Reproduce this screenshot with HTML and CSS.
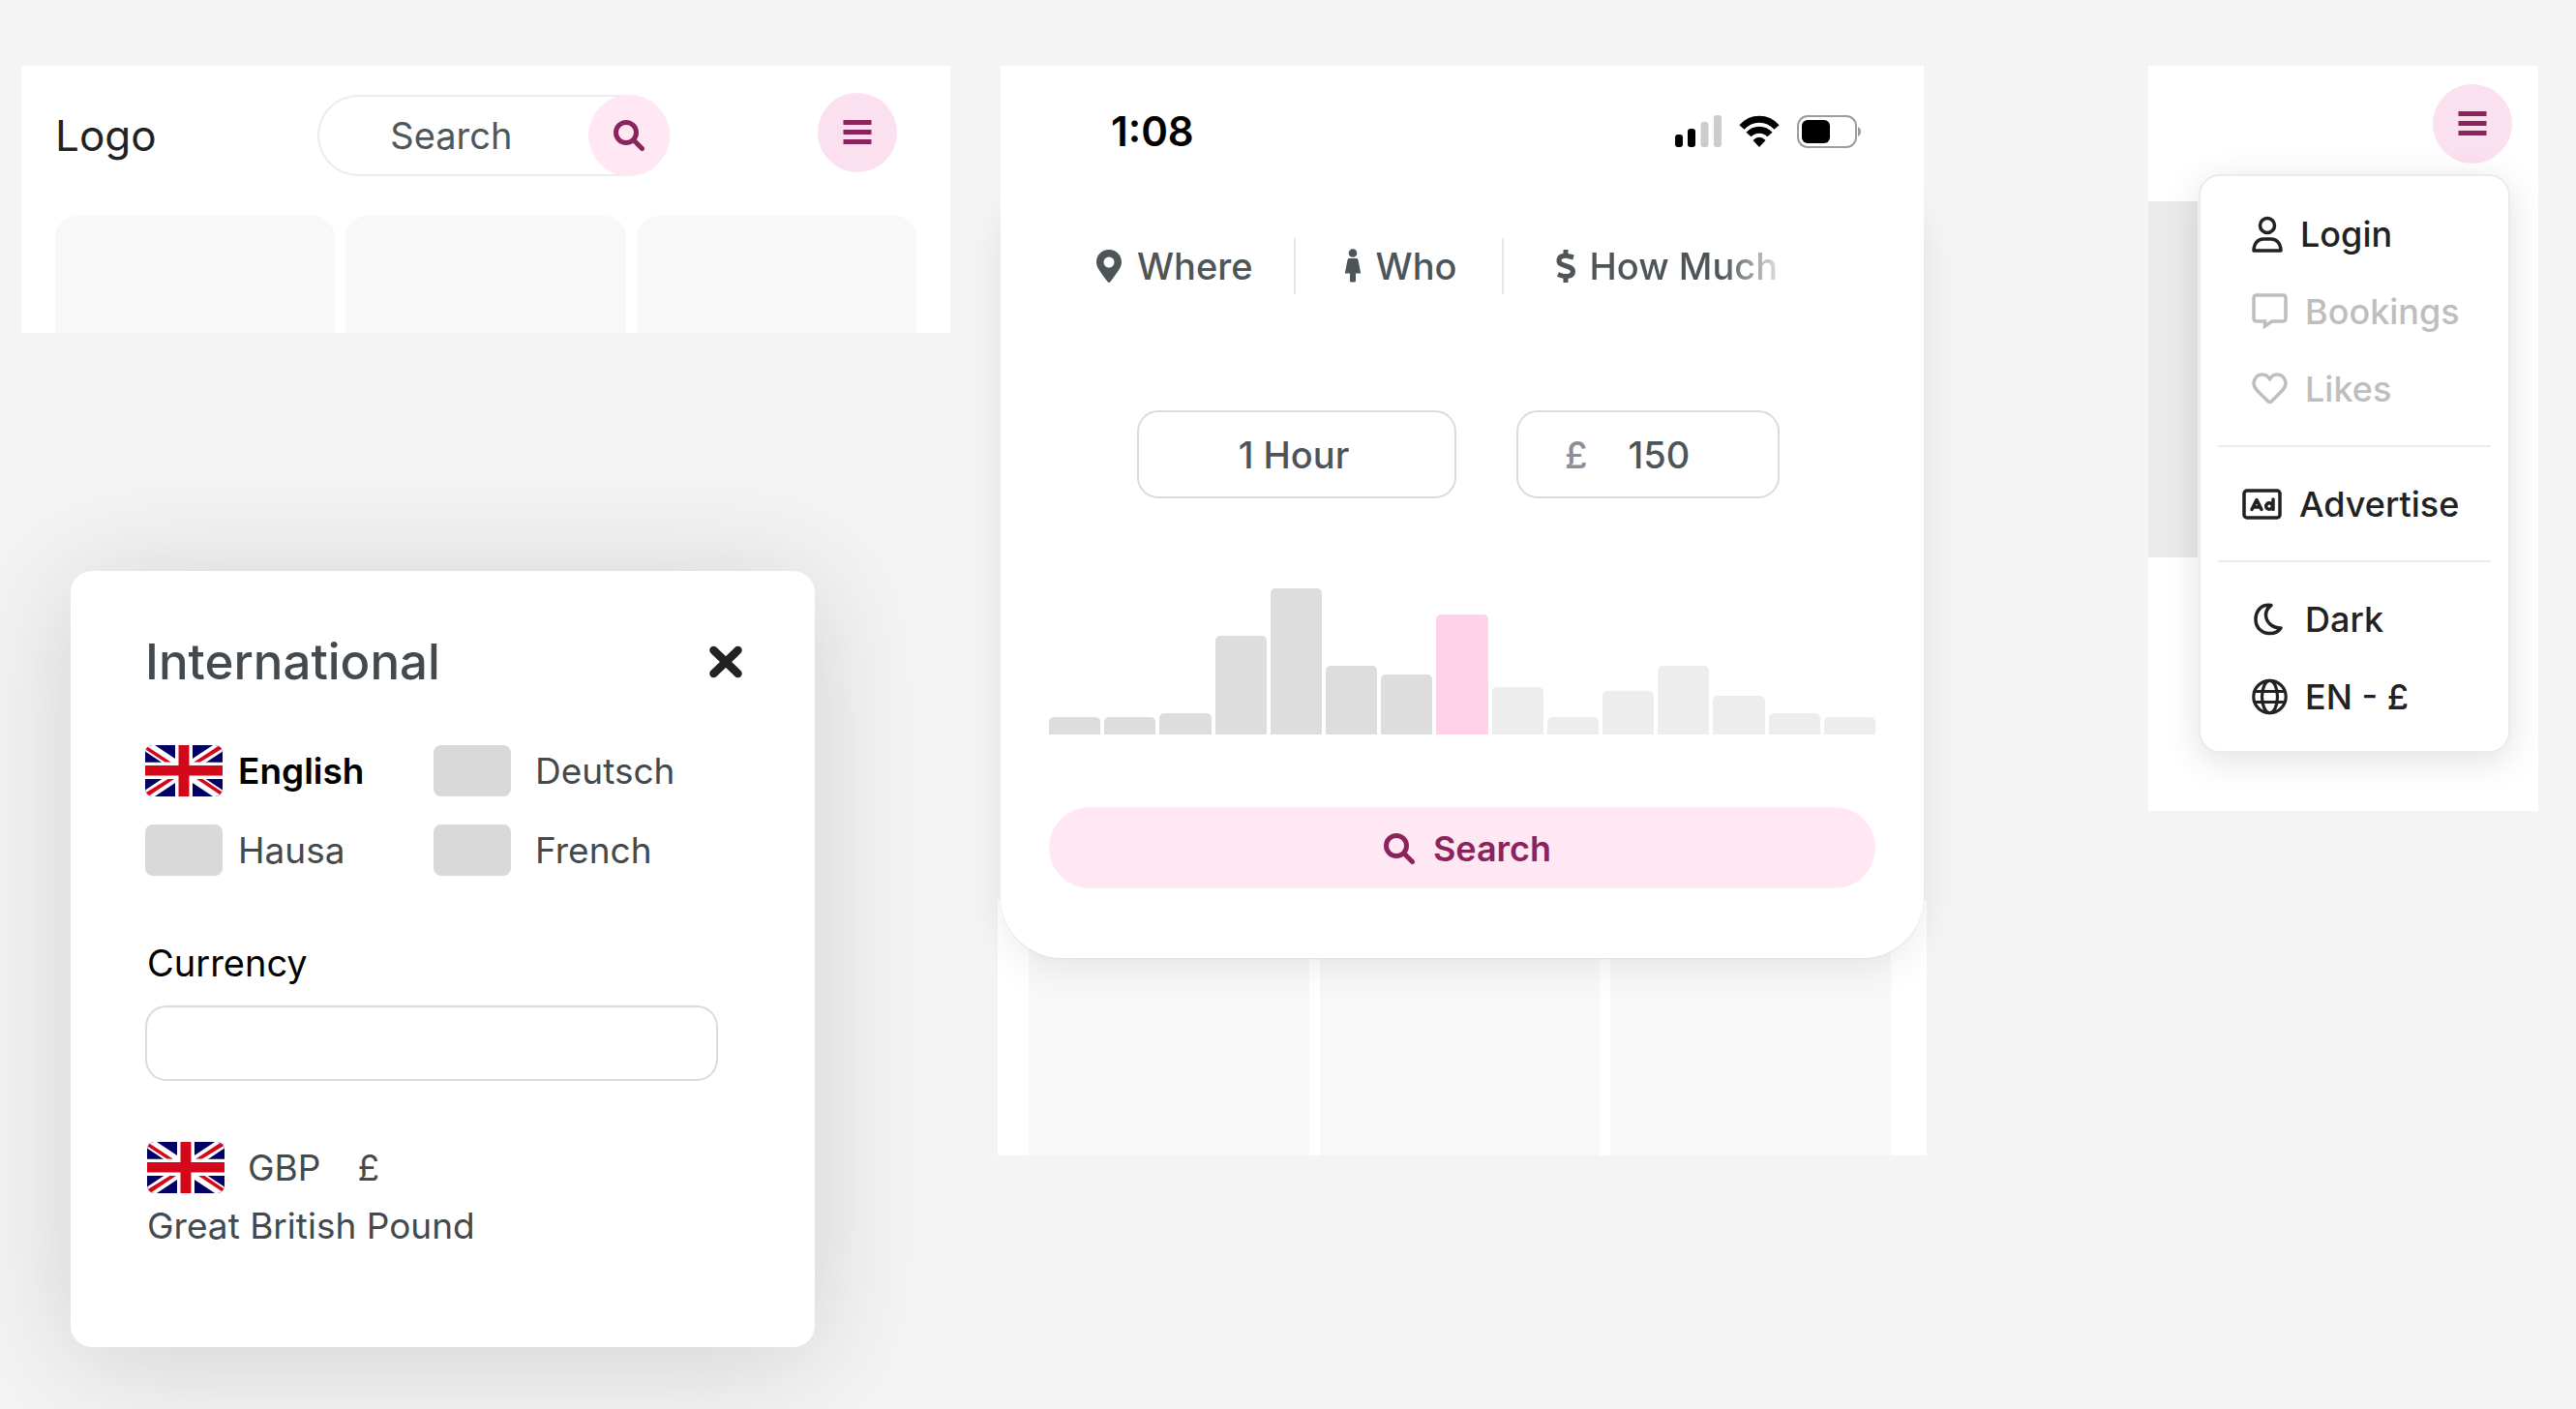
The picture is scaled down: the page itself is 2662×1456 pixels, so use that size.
FILE: index.html
```html
<!DOCTYPE html>
<html lang="en">
<head>
<meta charset="utf-8">
<meta name="viewport" content="width=device-width, initial-scale=1">
<title>Navigation components</title>
<link rel="stylesheet" href="styles.css">
</head>
<body>
<svg class="defs" aria-hidden="true">
  <symbol id="search" viewBox="0 0 34 34">
    <circle cx="14" cy="14" r="10.500" fill="none" stroke="currentColor" stroke-width="5"/>
    <path d="M22 22 L30.500 30.500" stroke="currentColor" stroke-width="5" stroke-linecap="round"/>
  </symbol>
  <symbol id="bars" viewBox="0 0 30 28">
    <path d="M0.5 3.5H29.5M0.5 13.5H29.5M0.5 23.5H29.5" stroke="currentColor" stroke-width="5"/>
  </symbol>
  <symbol id="flag" viewBox="0 0 80 53">
    <path fill="#006" d="M0 0H80V53H0z"/>
    <path stroke="#fff" stroke-width="11" d="M0 0L80 53M80 0L0 53"/>
    <path fill="#d4081b" d="M0 0L27 17.700H20.800L0 4.200zM80 0V3.500L56.500 17.700H50L77 0zM0 53V49.500L23.500 35H30L3 53zM80 53L53 35H59.500L80 48.700z"/>
    <path fill="#fff" d="M31 0H49V53H31zM0 17.700H80V35H0z"/>
    <path fill="#d4081b" d="M34.500 0H45.500V53H34.500zM0 21H80V31.500H0z"/>
  </symbol>
</svg>

<main class="board">
  <div class="column-left">
    <section class="header-panel">
      <header class="site-header">
        <a class="logo" href="#">Logo</a>
        <form class="search-pill">
          <input class="search-input" type="text" placeholder="Search" aria-label="Search">
          <button class="round search-go" type="button" aria-label="Search"><svg class="icon-search"><use href="#search"/></svg></button>
        </form>
        <button class="round menu-button" type="button" aria-label="Menu"><svg class="icon-bars"><use href="#bars"/></svg></button>
      </header>
      <div class="tiles tiles-top"><div></div><div></div><div></div></div>
    </section>

    <section class="dialog">
      <div class="dialog-head">
        <h2>International</h2>
        <button class="close" type="button" aria-label="Close">
          <svg viewBox="0 0 36 36"><path d="M5.500 6L30.500 30M30.500 6L5.500 30" stroke="currentColor" stroke-width="8.500" stroke-linecap="round"/></svg>
        </button>
      </div>
      <div class="languages">
        <button class="language selected" type="button"><svg class="flag"><use href="#flag"/></svg>English</button>
        <button class="language wide" type="button"><span class="flag"></span>Deutsch</button>
        <button class="language" type="button"><span class="flag"></span>Hausa</button>
        <button class="language wide" type="button"><span class="flag"></span>French</button>
      </div>
      <label class="currency-label" for="currency">Currency</label>
      <input class="field currency-input" id="currency" type="text">
      <div class="currency">
        <div class="currency-code"><svg class="flag"><use href="#flag"/></svg><span>GBP</span><span>£</span></div>
        <div>Great British Pound</div>
      </div>
    </section>
  </div>

  <section class="phone">
    <div class="sheet">
      <div class="status">
        <time>1:08</time>
        <div class="status-icons">
          <svg width="48" height="34" viewBox="0 0 48 34"><g fill="#000"><rect y="20" width="8" height="13" rx="3"/><rect x="13" y="14" width="8" height="19" rx="3"/></g><g fill="#ccc"><rect x="26.500" y="7" width="8" height="26" rx="3"/><rect x="40" width="8" height="33" rx="3"/></g></svg>
          <svg width="42" height="34" viewBox="0 0 42 34"><g fill="none" stroke="#000" stroke-width="7"><path d="M3 12.500C13 1.500 29 1.500 39 12.500"/><path d="M10 20C16 13.500 26 13.500 32 20"/></g><path d="M14.500 26Q21 19.500 27.500 26L21 33z"/></svg>
          <svg width="66" height="34" viewBox="0 0 66 34"><rect x="1" y="1" width="60" height="32" rx="10" fill="none" stroke="#9c9c9c" stroke-width="2"/><rect x="5" y="5" width="29" height="24" rx="6"/><path d="M63 12Q66 13.500 66 17T63 22z" fill="#9c9c9c"/></svg>
        </div>
      </div>
      <nav class="tabs">
        <a class="tab" href="#"><svg width="28" height="36" viewBox="0 0 28 36"><path fill="currentColor" fill-rule="evenodd" d="M14 1C22 1 27 7 27 14C27 18.500 24 23 15.500 34Q14 36 12.500 34C4 23 1 18.500 1 14C1 7 6 1 14 1zM14 8.500A5.500 5.500 0 1 0 14 19.500A5.500 5.500 0 1 0 14 8.500z"/></svg>Where</a>
        <a class="tab" href="#"><svg width="18" height="36" viewBox="0 0 18 36"><circle cx="9" cy="4.500" r="4.300" fill="currentColor"/><path fill="currentColor" d="M4.500 10H13.500L14.500 11.500L17.200 25.500H12V33Q12 34.500 10.500 34.500H7.500Q6 34.500 6 33V25.500H.800L3.500 11.500z"/></svg>Who</a>
        <a class="tab tab-fade" href="#"><svg width="20" height="36" viewBox="0 0 20 36"><path fill="none" stroke="currentColor" stroke-width="5" stroke-linejoin="round" d="M10 1V7M10 29V35M18 9C7 5.500 3 8 3 12.500C3 19 17.500 16.500 17.500 23.500C17.500 29 10 30 2 26.500"/></svg>How Much</a>
      </nav>
      <div class="budget">
        <input class="field duration" type="text" value="1 Hour" aria-label="Duration">
        <label class="field amount"><span>£</span><input type="text" value="150" aria-label="Amount"></label>
      </div>
      <div class="chart">
        <i style="height:18px"></i><i style="height:18px"></i><i style="height:22px"></i><i style="height:102px"></i><i style="height:151px"></i><i style="height:71px"></i><i style="height:62px"></i><i class="current" style="height:124px"></i><i class="above" style="height:49px"></i><i class="above" style="height:18px"></i><i class="above" style="height:45px"></i><i class="above" style="height:71px"></i><i class="above" style="height:40px"></i><i class="above" style="height:22px"></i><i class="above" style="height:18px"></i>
      </div>
      <button class="submit" type="button"><svg class="icon-search"><use href="#search"/></svg>Search</button>
    </div>
    <div class="tiles tiles-bottom"><div></div><div></div><div></div></div>
  </section>

  <section class="menu-panel">
    <div class="menu-top">
      <button class="round menu-button" type="button" aria-label="Menu"><svg class="icon-bars"><use href="#bars"/></svg></button>
    </div>
    <div class="hero"></div>
    <nav class="menu">
      <a class="item" href="#"><svg width="32" height="38" viewBox="0 0 32 38"><g fill="none" stroke="currentColor" stroke-width="3.500"><circle cx="16" cy="10" r="7.500"/><path stroke-linejoin="round" d="M2 36C2 29 6 24 12 24H20C26 24 30 29 30 36z"/></g></svg>Login</a>
      <a class="item off" href="#"><svg width="37" height="38" viewBox="0 0 37 38"><path fill="none" stroke="currentColor" stroke-width="3.500" d="M5 2H32Q35 2 35 5V26Q35 29 32 29H21L13.500 34V29H5Q2 29 2 26V5Q2 2 5 2z"/></svg>Bookings</a>
      <a class="item off" href="#"><svg width="37" height="38" viewBox="0 0 37 38"><path fill="none" stroke="currentColor" stroke-width="3.500" stroke-linejoin="round" d="M18.500 9C15 2 6 2.500 3 9C.500 14 3 18 6 21L16.500 31.500Q18.500 33.500 20.500 31.500L31 21C34 18 36.500 14 34 9C31 2.500 22 2 18.500 9z"/></svg>Likes</a>
      <hr>
      <a class="item ad" href="#"><svg width="41" height="32" viewBox="0 0 41 32"><g fill="none" stroke="currentColor" stroke-width="3.500" stroke-linecap="round" stroke-linejoin="round"><rect x="2" y="2" width="37" height="28" rx="3"/><path d="M10 21.500L15 11.500L20 21.500M12.500 19H18M32 11V21.500"/><circle cx="28" cy="18" r="3.300"/></g></svg>Advertise</a>
      <hr>
      <a class="item" href="#"><svg width="37" height="38" viewBox="0 0 37 38"><path fill="none" stroke="currentColor" stroke-width="3.500" stroke-linejoin="round" d="M20 4.500C9 3 4 11 4 19C4 28 11 34 19 33.500C24 33.500 28 31 30 28C21 28 15 22 14.500 15C14.300 11 16.500 7 20 4.500z"/></svg>Dark</a>
      <a class="item" href="#"><svg width="37" height="38" viewBox="0 0 37 38"><g fill="none" stroke="currentColor" stroke-width="3.200"><circle cx="18.500" cy="19" r="16.700"/><ellipse cx="18.500" cy="19" rx="8" ry="16.700"/><path d="M2.500 13.500H34.500M2.500 24.500H34.500"/></g></svg>EN - £</a>
    </nav>
  </section>
</main>
</body>
</html>
```
FILE: styles.css
```css
* { box-sizing: border-box; }
body {
  margin: 0;
  min-height: 100vh;
  overflow-x: hidden;
  background: #f4f4f4;
  color: #43494d;
  font: 400 37px/44px Inter, sans-serif;
}
button, input { margin: 0; padding: 0; border: 0; background: none; color: inherit; font: inherit; }
input { min-width: 0; outline: 0; }
a { color: inherit; text-decoration: none; }
svg { display: block; flex: none; }
.defs { position: absolute; width: 0; height: 0; }

.board {
  display: grid;
  grid-template-columns: 960fr 49fr 960fr 229fr 403fr;
  align-items: start;
  padding: 68px 39px 64px 22px;
}
.phone { grid-column: 3; }
.menu-panel { grid-column: 5; }

.round {
  display: flex;
  flex: none;
  align-items: center;
  justify-content: center;
  border-radius: 50%;
  color: #8b235d;
}
.menu-button { width: 82px; height: 82px; background: #fbe1f0; }
.icon-bars { width: 30px; height: 28px; }
.icon-search { width: 34px; height: 34px; }

.header-panel { height: 276px; padding: 28px 35px 0; background: #fff; }
.site-header {
  display: flex;
  align-items: flex-start;
  justify-content: space-between;
  padding-right: 20px;
}
.logo { padding-top: 22px; color: #222; font-size: 44px; }
.search-pill {
  display: flex;
  width: 364px;
  height: 84px;
  margin: 2px 0 0 14px;
  border-radius: 42px;
  box-shadow: inset 0 0 0 2px #ececec;
}
.search-input { flex: 1; padding-left: 75px; font-size: 38px; }
.search-input::placeholder { color: #50575b; opacity: 1; }
.search-go { width: 84px; height: 84px; background: #ffe7f3; }

.tiles { display: grid; grid-template-columns: repeat(3, 1fr); gap: 11px; }
.tiles div { background: #f8f8f8; }
.tiles-top { height: 121px; margin-top: 41px; }
.tiles-top div { border-radius: 22px 22px 0 0; }

.dialog {
  width: calc(100% - 191px);
  height: 802px;
  margin: 246px 0 0 51px;
  padding: 66px 74px 0 77px;
  border-radius: 22px;
  background: #fff;
  box-shadow: 0 12px 120px rgba(50, 50, 65, .18);
}
.dialog-head { display: flex; align-items: center; justify-content: space-between; }
.dialog h2 { margin: 0; font-size: 51px; font-weight: 500; line-height: 56px; }
.close { width: 36px; height: 36px; color: #222; }
.languages {
  display: grid;
  grid-template-columns: 298px 1fr;
  row-gap: 29px;
  margin-top: 58px;
}
.language { display: flex; align-items: center; gap: 16px; height: 53px; text-align: left; }
.language.wide { gap: 25px; }
.language.selected { color: #000; font-weight: 600; }
.flag { flex: none; width: 80px; height: 53px; border-radius: 8px; background: #d9d9d9; }
.currency-label { display: block; margin-top: 68px; padding-left: 2px; color: #000; font-size: 38px; }
.field { border: 2px solid #dadbe1; border-radius: 22px; }
.currency-input { display: block; width: 592px; height: 78px; margin-top: 22px; padding: 0 20px; }
.currency { margin: 63px 0 0 2px; }
.currency-code { display: flex; align-items: center; gap: 24px; height: 53px; margin-bottom: 12px; }
.currency-code span + span { margin-left: 14px; }

.phone { display: flex; flex-direction: column; }
.sheet {
  position: relative;
  height: 922px;
  margin: 0 3px;
  padding: 46px 50px 0;
  border-radius: 0 0 64px 64px;
  background: #fff;
  font-size: 38px;
  font-weight: 500;
  color: #4e5559;
}
.sheet::before {
  content: "";
  position: absolute;
  z-index: -1;
  inset: 120px 0 0;
  border-radius: 64px;
  box-shadow: 0 10px 40px rgba(0, 0, 0, .08), 0 1px 2px #e8eeec;
}
.status { display: flex; justify-content: space-between; padding: 0 15px 0 64px; color: #000; }
.status time { font-size: 42px; font-weight: 600; }
.status-icons { display: flex; align-items: center; gap: 18px; }
.tabs { display: flex; align-items: center; margin-top: 88px; padding-left: 48px; }
.tab { display: flex; align-items: center; gap: 15px; height: 58px; }
.tab + .tab { margin-left: 42px; padding-left: 50px; border-left: 2px solid #e8e8e8; }
.tab + .tab-fade {
  margin-left: 46px;
  padding-left: 54px;
  -webkit-mask-image: linear-gradient(90deg, #000 80%, transparent 105%);
  mask-image: linear-gradient(90deg, #000 80%, transparent 105%);
}
.budget { display: flex; justify-content: center; gap: 62px; margin-top: 120px; padding-right: 8px; }
.budget .field { height: 91px; }
.duration { width: 330px; padding-right: 6px; text-align: center; }
.amount { display: flex; align-items: center; gap: 42px; width: 272px; padding: 0 48px; }
.amount span { color: #8e8e9a; }
.amount input { flex: 1; }
.chart { display: flex; align-items: flex-end; gap: 4px; height: 151px; margin-top: 93px; }
.chart i { flex: 1; border-radius: 5px 5px 0 0; background: #ddd; }
.chart .current { background: #ffd2e9; }
.chart .above { background: #ededed; }
.submit {
  display: flex;
  align-items: center;
  justify-content: center;
  gap: 18px;
  width: 100%;
  height: 84px;
  margin-top: 75px;
  padding: 2px 0 0 10px;
  border-radius: 42px;
  background: #ffe7f3;
  color: #8b235d;
  font-size: 36px;
  font-weight: 600;
}
.tiles-bottom {
  position: relative;
  z-index: -2;
  height: 264px;
  margin-top: -60px;
  padding: 0 37px 0 32px;
  background: #fff;
}

.menu-panel { position: relative; height: 770px; background: #fff; }
.menu-top { display: flex; justify-content: flex-end; height: 140px; padding: 19px 27px 0 0; }
.hero { width: 100%; height: 368px; background: linear-gradient(90deg, #eaeaea 51px, #fff 0); }
.menu {
  position: absolute;
  top: 112px;
  right: 29px;
  width: 322px;
  padding: 38px 18px 34px;
  border: 2px solid #ebebeb;
  border-radius: 22px;
  background: #fff;
  box-shadow: 0 8px 36px rgba(0, 0, 0, .12);
  color: #222;
  font-size: 36px;
  font-weight: 500;
}
.item { display: flex; align-items: center; gap: 18px; height: 44px; padding-left: 35px; }
.item + .item { margin-top: 36px; }
.item.off { color: #bebebe; }
.item.ad { padding-left: 25px; }
.menu hr { height: 2px; margin: 36px 0 37px; border: 0; background: #ebebeb; }
```
